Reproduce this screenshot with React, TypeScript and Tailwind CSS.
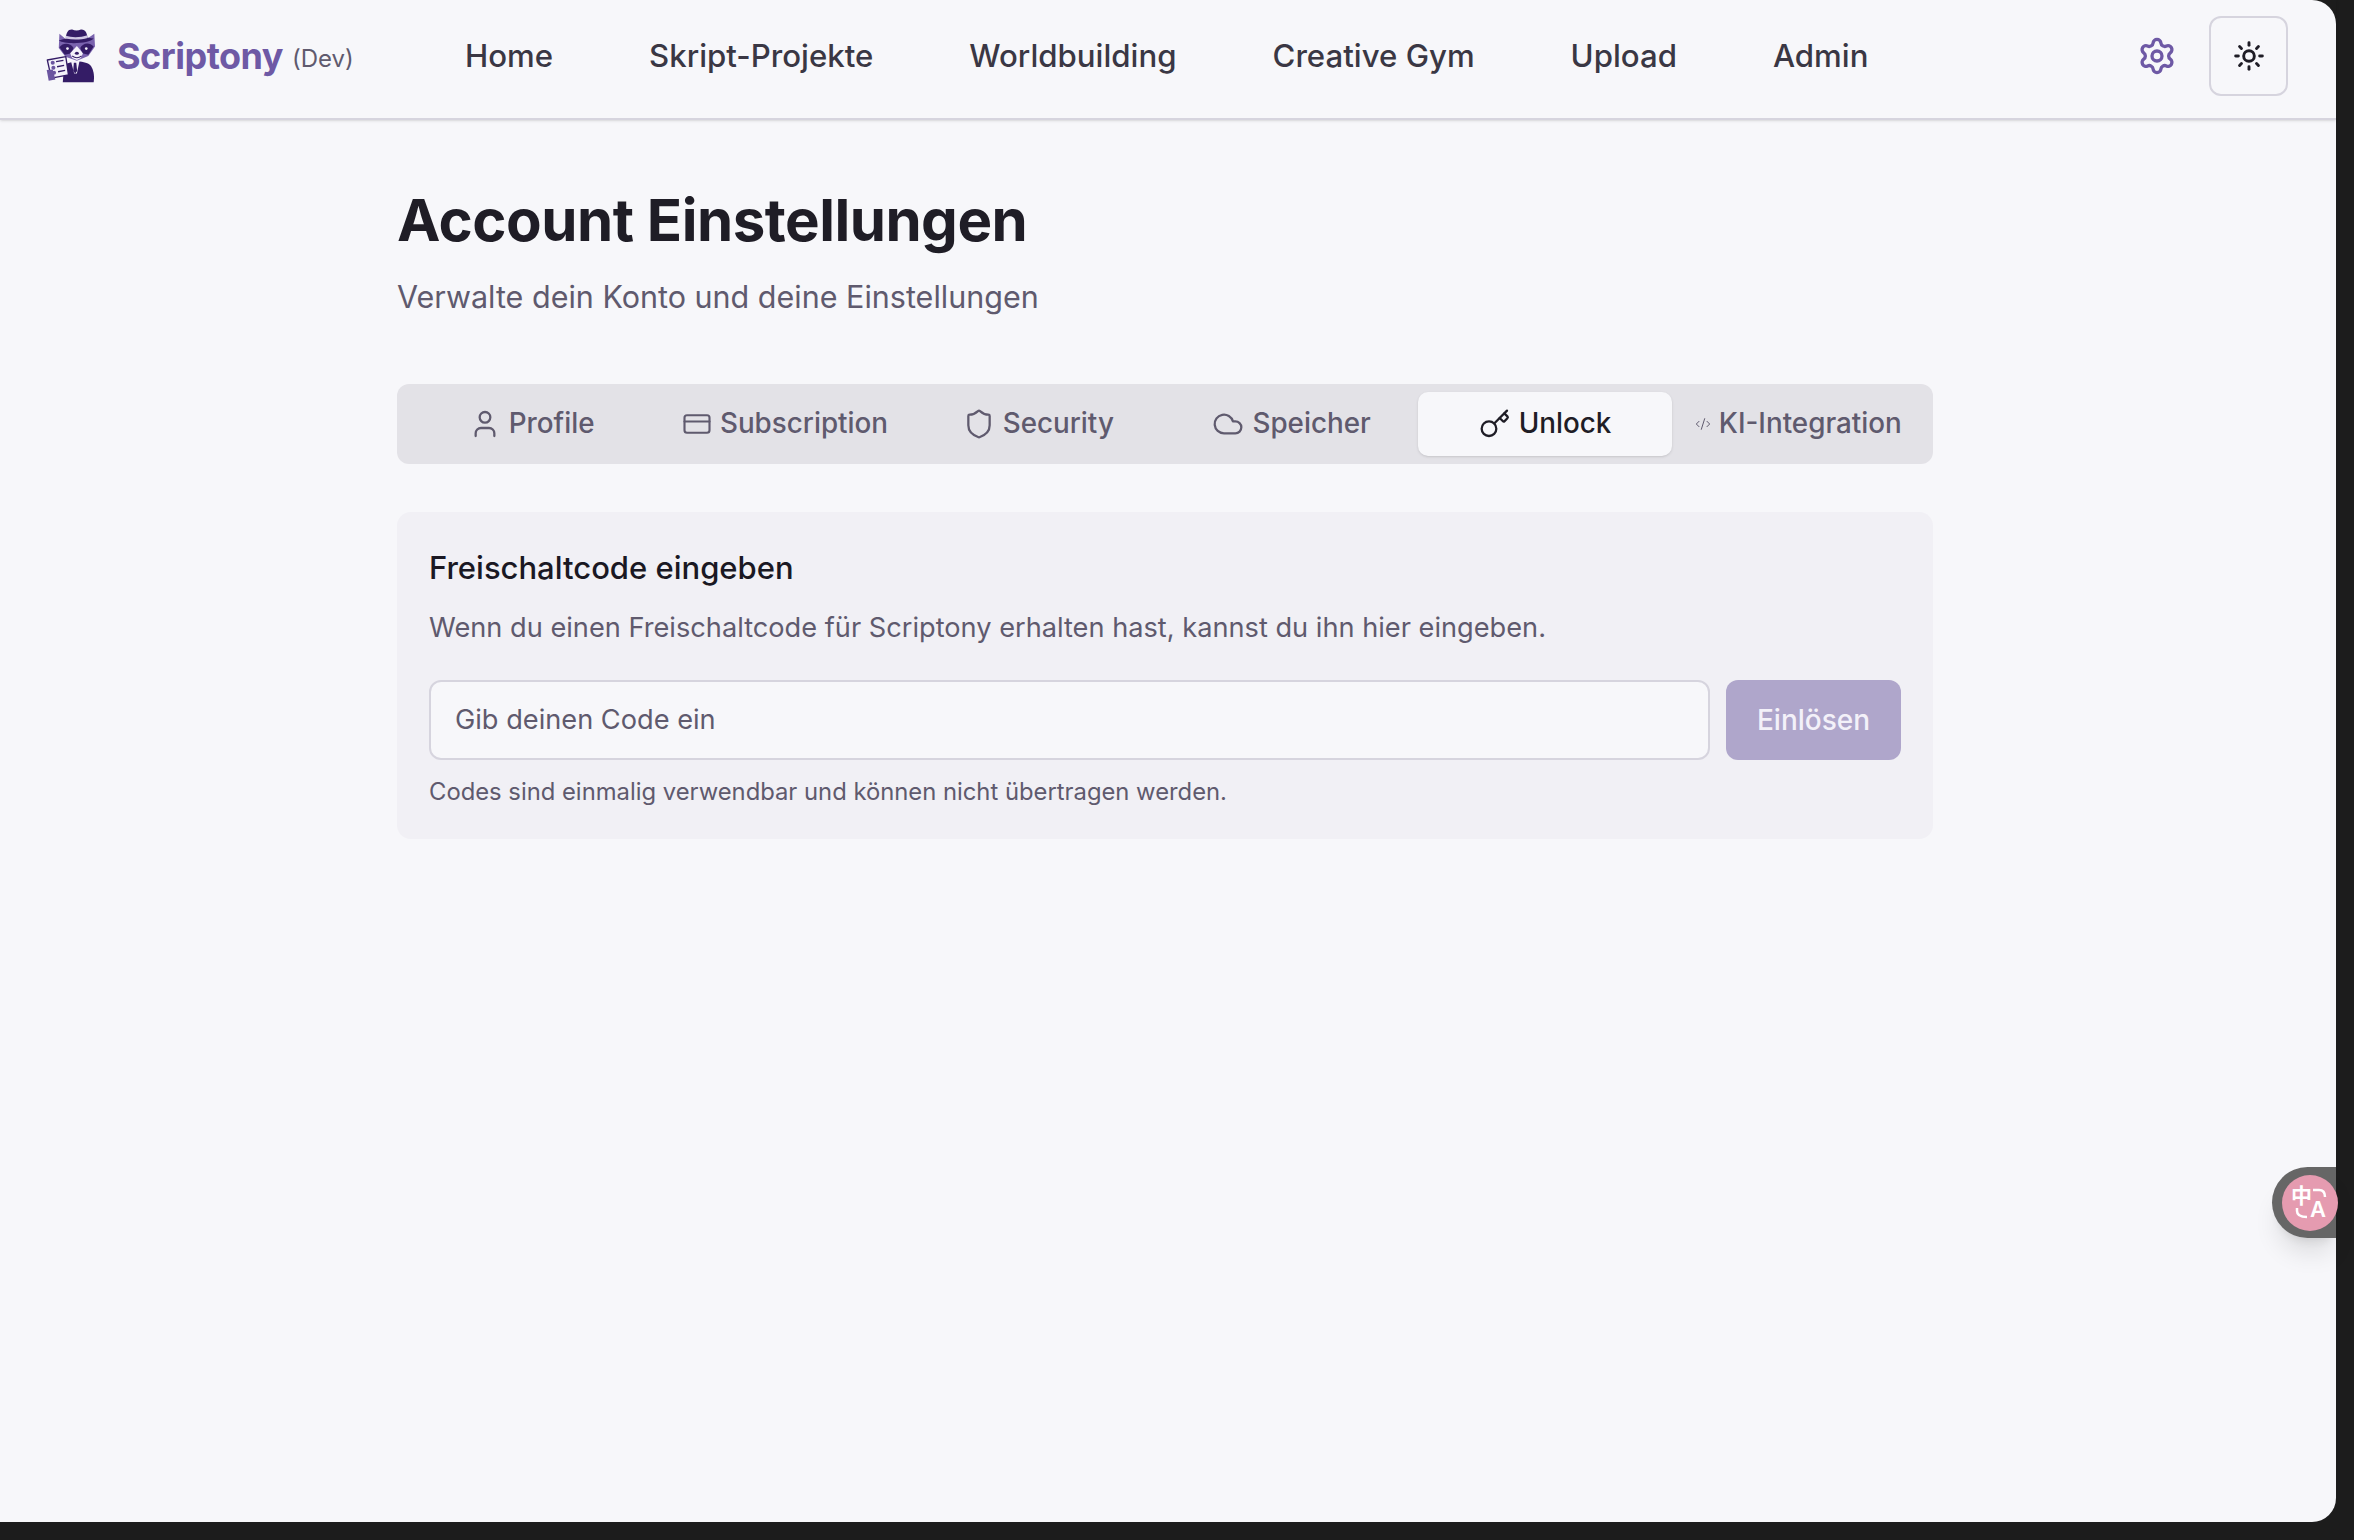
import React from 'react';
import { Settings, Sun, User, CreditCard, Shield, Cloud, Key, CodeXml } from 'lucide-react';

const navItems = ['Home', 'Skript-Projekte', 'Worldbuilding', 'Creative Gym', 'Upload', 'Admin'];

const tabs = [
  { label: 'Profile', icon: User, size: 32 },
  { label: 'Subscription', icon: CreditCard, size: 30 },
  { label: 'Security', icon: Shield, size: 32 },
  { label: 'Speicher', icon: Cloud, size: 32 },
  { label: 'Unlock', icon: Key, size: 32, active: true },
  { label: 'KI-Integration', icon: CodeXml, size: 16 },
];

function Logo() {
  return (
    <svg width="49" height="54" viewBox="46 40 146 160" aria-hidden="true">
      {/* body */}
      <path d="M100 150 C112 132 168 132 180 150 C190 165 190 185 188 198 L96 198 Z" fill="#341c66" />
      <path d="M120 134 L146 134 L138 172 L130 172 Z" fill="#f4f2fa" />
      <path d="M129 140 L136 140 L139 165 L133 172 L127 165 Z" fill="#341c66" />
      {/* ears and head */}
      <path d="M86 54 L108 72 L166 70 L190 54 L192 92 L172 120 L138 134 L104 122 L84 96 Z" fill="#7a63ae" />
      <path d="M86 94 C96 80 118 80 128 96 L122 112 L102 116 Z" fill="#341c66" />
      <path d="M188 92 C176 78 156 80 148 96 L154 112 L172 116 Z" fill="#341c66" />
      <path d="M118 112 L138 90 L156 112 L150 126 L138 132 L124 126 Z" fill="#f4f2fa" />
      <circle cx="110" cy="98" r="4" fill="#f4f2fa" />
      <circle cx="166" cy="98" r="4" fill="#f4f2fa" />
      <ellipse cx="138" cy="112" rx="6" ry="4.5" fill="#341c66" />
      <path d="M124 120 Q138 130 152 120" fill="none" stroke="#341c66" strokeWidth="3" />
      {/* hat */}
      <path d="M105 68 C106 50 112 40 124 41 C132 45 142 45 150 41 C164 40 168 52 170 66 Z" fill="#341c66" />
      <path d="M84 74 C104 64 168 62 188 68 C176 84 102 86 84 74 Z" fill="#341c66" />
      <path d="M105 60 C125 66 150 65 170 58 L170 66 C150 72 125 72 105 68 Z" fill="#cfc6e4" />
      {/* paper */}
      <path d="M50 132 L105 122 L113 176 L62 186 Z" fill="#f4f2fa" stroke="#341c66" strokeWidth="4" strokeLinejoin="round" />
      <path d="M76 137 L98 133 M79 152 L100 148 M82 167 L103 163" stroke="#341c66" strokeWidth="4" />
      <circle cx="66" cy="140" r="6" fill="#6b55a0" />
      <circle cx="68" cy="155" r="6" fill="#6b55a0" />
      <circle cx="70" cy="170" r="6" fill="#6b55a0" />
      <path d="M48 162 L66 160 L74 190 L54 194 Z" fill="#6b55a0" />
    </svg>
  );
}

function Header() {
  return (
    <header className="flex h-[120px] items-center border-b-2 border-[#d6d4de] pb-[6px] pl-[46px] pr-[48px] shadow-sm">
      <div className="flex w-[419px] shrink-0 items-center">
        <Logo />
        <span className="ml-[22px] text-[36px] font-bold tracking-[-0.5px] text-[#6e59a5]">Scriptony</span>
        <span className="ml-[9px] mt-[5px] text-[24px] text-[#5f5a6e]">(Dev)</span>
      </div>
      <nav className="flex gap-[96px]">
        {navItems.map((item) => (
          <a key={item} className="text-[31.2px] font-medium text-[#3a3744]">
            {item}
          </a>
        ))}
      </nav>
      <div className="ml-auto flex items-center gap-[32px]">
        <button className="text-[#6e59a5]">
          <Settings size={40} strokeWidth={2} />
        </button>
        <button className="flex h-[80px] w-[79px] items-center justify-center rounded-[12px] border-2 border-[#d6d4de] text-[#1f1d26]">
          <Sun size={32} strokeWidth={2.2} />
        </button>
      </div>
    </header>
  );
}

function Tabs() {
  return (
    <div className="mt-[65px] grid h-[80px] grid-cols-6 rounded-[12px] bg-[#e3e2e7] p-[8px]">
      {tabs.map((tab) => {
        const Icon = tab.icon;
        return (
          <div
            key={tab.label}
            className={
              tab.active
                ? 'flex items-center justify-center gap-[8px] whitespace-nowrap rounded-[10px] bg-[#f7f7fa] text-[27.8px] font-medium text-[#1f1d26] shadow-sm'
                : 'flex items-center justify-center gap-[8px] whitespace-nowrap text-[27.8px] font-medium text-[#5f5a6e]'
            }
          >
            <Icon size={tab.size} strokeWidth={tab.size < 20 ? 1.5 : 1.7} />
            {tab.label}
          </div>
        );
      })}
    </div>
  );
}

function UnlockCard() {
  return (
    <section className="mt-[48px] h-[327px] rounded-[14px] bg-[#f1f0f5] px-[32px] pt-[36px]">
      <h3 className="text-[31px] leading-[40px] font-medium text-[#1a1823]">Freischaltcode eingeben</h3>
      <p className="mt-[20px] text-[27.2px] leading-[40px] text-[#5f5a6e]">
        Wenn du einen Freischaltcode für Scriptony erhalten hast, kannst du ihn hier eingeben.
      </p>
      <div className="mt-[32px] flex gap-[16px]">
        <div className="flex h-[80px] flex-1 items-center rounded-[12px] border-2 border-[#d6d4de] bg-[#f7f7fa] pl-[24px] text-[27.2px] text-[#5f5a6e]">
          Gib deinen Code ein
        </div>
        <button className="h-[80px] w-[175px] rounded-[12px] bg-[#afa6cb] text-[28px] font-medium text-[#f3f1f9]">
          Einlösen
        </button>
      </div>
      <p className="mt-[16px] text-[23.8px] leading-[32px] text-[#5f5a6e]">
        Codes sind einmalig verwendbar und können nicht übertragen werden.
      </p>
    </section>
  );
}

function TranslateWidget() {
  return (
    <div className="absolute right-0 top-[1167px] flex h-[71px] w-[64px] items-center rounded-l-full bg-[#666666] pl-[10px] shadow-xl">
      <div className="relative h-[56px] w-[56px] shrink-0 rounded-full bg-[#e59bb0] text-white">
        <span className="absolute left-[9px] top-[10px] text-[21px] leading-[22px] font-semibold">中</span>
        <span className="absolute left-[28px] top-[22px] text-[22px] leading-[24px] font-semibold">A</span>
        <svg className="absolute left-0 top-0" width="56" height="56" viewBox="0 0 56 56" fill="none" stroke="white" strokeWidth="2.5">
          <path d="M31 15 H37 Q43 15 43 22" />
          <path d="M15 33 V36 Q15 42 25 42" />
        </svg>
      </div>
    </div>
  );
}

export default function App() {
  return (
    <div
      className="h-[1540px] w-[2354px] overflow-hidden bg-[#1c1c1c] text-[#1f1d26]"
      style={{ fontFamily: 'Inter, "Noto Sans CJK SC", sans-serif' }}
    >
      <div className="relative h-[1522px] w-[2336px] rounded-r-[24px] bg-[#f7f7fa]">
        <Header />
        <main className="ml-[397px] w-[1536px] pt-[67px]">
          <h1 className="text-[58.2px] leading-[66px] font-bold tracking-[-0.5px] text-[#1f1d26]">Account Einstellungen</h1>
          <p className="mt-[22px] text-[30.5px] leading-[44px] text-[#5f5a6e]">Verwalte dein Konto und deine Einstellungen</p>
          <Tabs />
          <UnlockCard />
        </main>
        <TranslateWidget />
      </div>
    </div>
  );
}
